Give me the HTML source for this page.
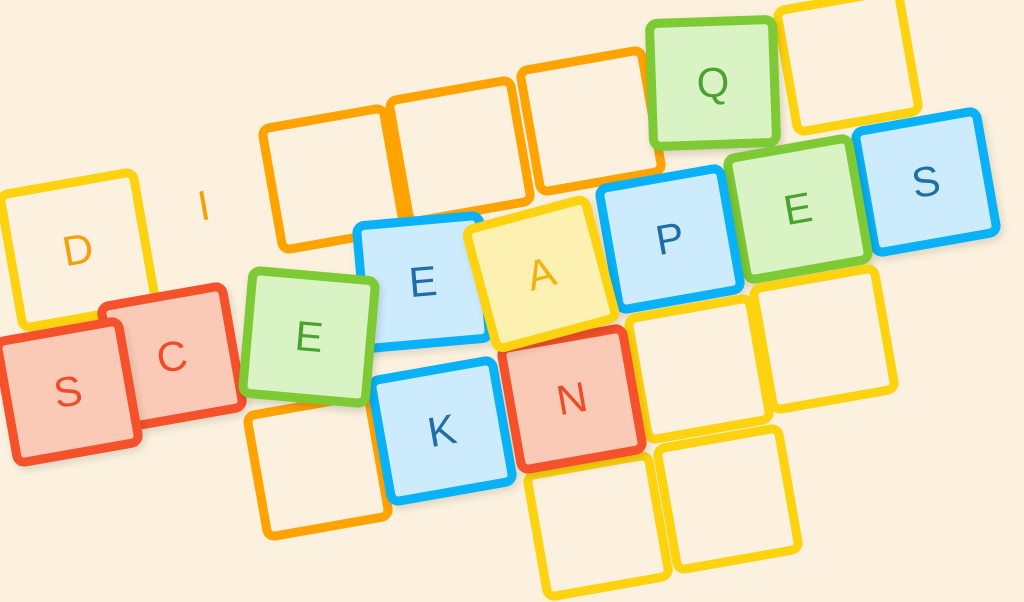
<!DOCTYPE html>
<html><head><style>
html,body{margin:0;padding:0}
body{width:1024px;height:585px;overflow:hidden;background:#fbf1de;position:relative;font-family:"Liberation Sans",sans-serif}
.t{position:absolute;width:114px;height:114px;border:9px solid;border-radius:12px;display:flex;align-items:center;justify-content:center;font-size:42px;box-sizing:content-box}
.y{border-color:#fdd20e;background:transparent}
.o{border-color:#ffa300;background:transparent}
.g{border-color:#7dca35;background:#d9f3c5;color:#4aa330;box-shadow:2px 4px 8px rgba(0,0,0,.15)}
.b{border-color:#09b2f6;background:#ccebfc;color:#1f6eaa;box-shadow:2px 4px 8px rgba(0,0,0,.12)}
.r{border-color:#f5512a;background:#fbcab7;color:#f04a26;box-shadow:2px 4px 8px rgba(0,0,0,.12)}
.ya{border-color:#fdd20e;background:#fdf1b2;color:#f6b00c;box-shadow:2px 4px 8px rgba(0,0,0,.12)}
</style></head><body>
<div class="t y" style="left:6px;top:178px;width:126px;height:126px;transform:rotate(-10deg);color:#f5a00a">D</div>
<div style="position:absolute;left:198px;top:182px;font-size:42px;color:#f5a00a;transform:rotate(-10deg)">I</div>
<div class="t o" style="left:267px;top:113px;transform:rotate(-10deg)"></div>
<div class="t o" style="left:394px;top:85px;transform:rotate(-10deg)"></div>
<div class="t o" style="left:525px;top:55px;transform:rotate(-10deg)"></div>
<div class="t y" style="left:782px;top:-5px;transform:rotate(-10deg)"></div>
<div class="t g" style="left:647px;top:17px;transform:rotate(-2deg)">Q</div>
<div class="t b" style="left:860px;top:116px;transform:rotate(-10deg)">S</div>
<div class="t g" style="left:732px;top:143px;transform:rotate(-10deg)">E</div>
<div class="t b" style="left:604px;top:173px;transform:rotate(-10deg)">P</div>
<div class="t y" style="left:758px;top:273px;transform:rotate(-10deg)"></div>
<div class="t y" style="left:633px;top:303px;transform:rotate(-10deg)"></div>
<div class="t y" style="left:662px;top:433px;transform:rotate(-10deg)"></div>
<div class="t y" style="left:532px;top:460px;transform:rotate(-10deg)"></div>
<div class="t o" style="left:252px;top:400px;transform:rotate(-10deg)"></div>
<div class="t b" style="left:376px;top:365px;transform:rotate(-10deg)">K</div>
<div class="t r" style="left:506px;top:333px;transform:rotate(-10deg)">N</div>
<div class="t b" style="left:357px;top:216px;transform:rotate(-5deg)">E</div>
<div class="t ya" style="left:475px;top:208px;transform:rotate(-15deg)">A</div>
<div class="t r" style="left:106px;top:291px;transform:rotate(-10deg)">C</div>
<div class="t r" style="left:2px;top:326px;transform:rotate(-10deg)">S</div>
<div class="t g" style="left:243px;top:271px;transform:rotate(5deg)">E</div>
</body></html>
